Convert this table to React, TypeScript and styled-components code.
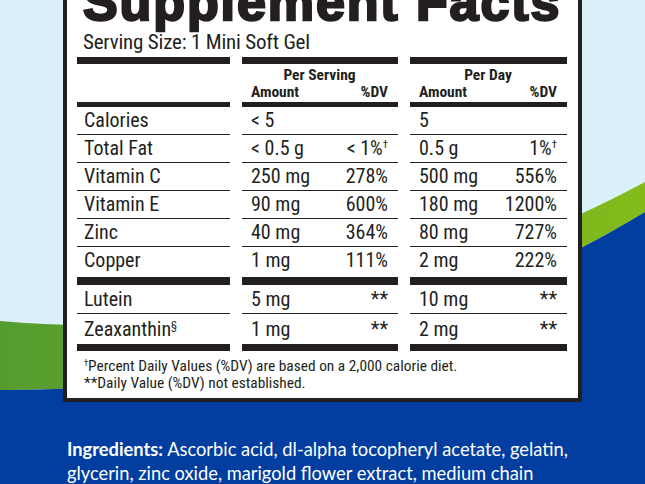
import React from 'react'
import styled, { createGlobalStyle, css } from 'styled-components'

const GlobalStyle = createGlobalStyle`
  html, body {
    margin: 0;
    padding: 0;
    background: #dcf0f9;
  }
  body {
    width: 645px;
    height: 484px;
    overflow: hidden;
  }
`

const ink = '#231f20'

const condensed = css`
  font-family: "Roboto Condensed", Roboto, "Liberation Sans", sans-serif;
  font-stretch: 75%;
`

const columns = css`
  display: grid;
  grid-template-columns: 153px 156px 157px;
  column-gap: 12px;
`

const Page = styled.div`
  position: relative;
  width: 645px;
  height: 484px;
  overflow: hidden;
`

const Backdrop = styled.svg`
  position: absolute;
  inset: 0;
  width: 100%;
  height: 100%;
`

const Content = styled.div`
  position: relative;
  display: flex;
  flex-direction: column;
`

const Panel = styled.section`
  margin-left: 63px;
  width: 519px;
  box-sizing: border-box;
  background: #fff;
  border: 4.5px solid ${ink};
  border-top: none;
  padding: 0 9.5px 6.5px 10px;
  color: ${ink};
`

const Title = styled.h1`
  margin: -24px 0 0 6px;
  font: 700 52px/52px "Liberation Sans", Arial, sans-serif;
  letter-spacing: 1.9px;
  -webkit-text-stroke: 2.4px ${ink};
  white-space: nowrap;
`

const Serving = styled.div`
  margin: 2px 0 0 6px;
  ${condensed};
  font-size: 21px;
  line-height: 24px;
  letter-spacing: -0.2px;
  white-space: nowrap;
`

const BarRow = styled.div<{ $top: number; $h: number }>`
  ${columns};
  margin-top: ${(p) => p.$top}px;
  height: ${(p) => p.$h}px;
`

const Bar = styled.div`
  background: ${ink};
`

const HeadRow = styled.div`
  ${columns};
  height: 38px;
  box-sizing: border-box;
  padding-top: 3px;
`

const HeadCell = styled.div`
  display: flex;
  flex-direction: column;
  padding: 0 10px 0 9px;
  ${condensed};
  font-weight: 700;
  font-size: 15.5px;
  line-height: 16.5px;
`

const HeadTitle = styled.div`
  text-align: center;
`

const Split = styled.div`
  display: flex;
  justify-content: space-between;
  white-space: nowrap;
`

const Row = styled.div`
  ${columns};
`

const Cell = styled.div<{ $line: boolean; $tall?: boolean }>`
  box-sizing: border-box;
  height: ${(p) => (p.$tall ? 29.5 : 28)}px;
  padding: ${(p) => (p.$tall ? 1.5 : 0)}px 10px 0 9px;
  border-bottom: ${(p) => (p.$line ? `1.5px solid ${ink}` : 'none')};
  ${condensed};
  font-stretch: 77%;
  font-size: 20px;
  line-height: 26.5px;
  white-space: nowrap;
`

const NameCell = styled(Cell)`
  padding-left: 7px;
  padding-right: 0;
`

const Sup = styled.span`
  font-size: 0.55em;
  vertical-align: 0.6em;
  line-height: 0;
`

const Notes = styled.div`
  margin: 7px 0 0 7px;
  ${condensed};
  font-size: 15.4px;
  line-height: 17px;
  white-space: nowrap;
`

const Ingredients = styled.p`
  margin: 36px 0 0 67px;
  font: 400 18.3px/23.5px Lato, "Open Sans", sans-serif;
  color: #fff;
  white-space: nowrap;

  b {
    font-weight: 700;
  }
`

type Nutrient = {
  name: string
  mark?: string
  serving: [string, string]
  day: [string, string]
  dvMark?: string
}

const main: Nutrient[] = [
  { name: 'Calories', serving: ['< 5', ''], day: ['5', ''] },
  { name: 'Total Fat', serving: ['< 0.5 g', '< 1%'], day: ['0.5 g', '1%'], dvMark: '†' },
  { name: 'Vitamin C', serving: ['250 mg', '278%'], day: ['500 mg', '556%'] },
  { name: 'Vitamin E', serving: ['90 mg', '600%'], day: ['180 mg', '1200%'] },
  { name: 'Zinc', serving: ['40 mg', '364%'], day: ['80 mg', '727%'] },
  { name: 'Copper', serving: ['1 mg', '111%'], day: ['2 mg', '222%'] },
]

const extra: Nutrient[] = [
  { name: 'Lutein', serving: ['5 mg', '**'], day: ['10 mg', '**'] },
  { name: 'Zeaxanthin', mark: '§', serving: ['1 mg', '**'], day: ['2 mg', '**'] },
]

const Bars = ({ top, h }: { top: number; h: number }) => (
  <BarRow $top={top} $h={h}>
    <Bar />
    <Bar />
    <Bar />
  </BarRow>
)

const NutrientRow = ({ item, line, tall }: { item: Nutrient; line: boolean; tall?: boolean }) => (
  <Row>
    <NameCell $line={line} $tall={tall}>
      {item.name}
      {item.mark && <Sup>{item.mark}</Sup>}
    </NameCell>
    {[item.serving, item.day].map(([amt, dv], i) => (
      <Cell key={i} $line={line} $tall={tall}>
        <Split>
          <span>{amt}</span>
          <span>
            {dv}
            {dv && item.dvMark && <Sup>{item.dvMark}</Sup>}
          </span>
        </Split>
      </Cell>
    ))}
  </Row>
)

const App = () => {
  return (
    <Page>
      <GlobalStyle />
      <Backdrop viewBox="0 0 645 484" preserveAspectRatio="none">
        <defs>
          <linearGradient id="swoosh" x1="0" y1="0" x2="1" y2="0">
            <stop offset="0" stopColor="#559c30" />
            <stop offset="1" stopColor="#84bb1b" />
          </linearGradient>
        </defs>
        <rect width="645" height="484" fill="#dcf0f9" />
        <path d="M0 321 C250 343 460 280 645 182 L645 212 C480 312 250 392 0 390 Z" fill="url(#swoosh)" />
        <path d="M0 390 C250 392 480 312 645 212 L645 484 L0 484 Z" fill="#013ea0" />
      </Backdrop>
      <Content>
        <Panel>
          <Title>Supplement Facts</Title>
          <Serving>Serving Size: 1 Mini Soft Gel</Serving>
          <Bars top={3} h={7} />
          <HeadRow>
            <div />
            <HeadCell>
              <HeadTitle>Per Serving</HeadTitle>
              <Split>
                <span>Amount</span>
                <span>%DV</span>
              </Split>
            </HeadCell>
            <HeadCell>
              <HeadTitle>Per Day</HeadTitle>
              <Split>
                <span>Amount</span>
                <span>%DV</span>
              </Split>
            </HeadCell>
          </HeadRow>
          <Bars top={0} h={5} />
          {main.map((item, i) => (
            <NutrientRow key={item.name} item={item} line={i < main.length - 1} />
          ))}
          <Bars top={2} h={7.5} />
          {extra.map((item, i) => (
            <NutrientRow key={item.name} item={item} line={i < extra.length - 1} tall />
          ))}
          <Bars top={0} h={7} />
          <Notes>
            <Sup>†</Sup>Percent Daily Values (%DV) are based on a 2,000 calorie diet.
            <br />
            **Daily Value (%DV) not established.
          </Notes>
        </Panel>
        <Ingredients>
          <b>Ingredients:</b> Ascorbic acid, dl-alpha tocopheryl acetate, gelatin,
          <br />
          glycerin, zinc oxide, marigold flower extract, medium chain
        </Ingredients>
      </Content>
    </Page>
  )
}

export default App
